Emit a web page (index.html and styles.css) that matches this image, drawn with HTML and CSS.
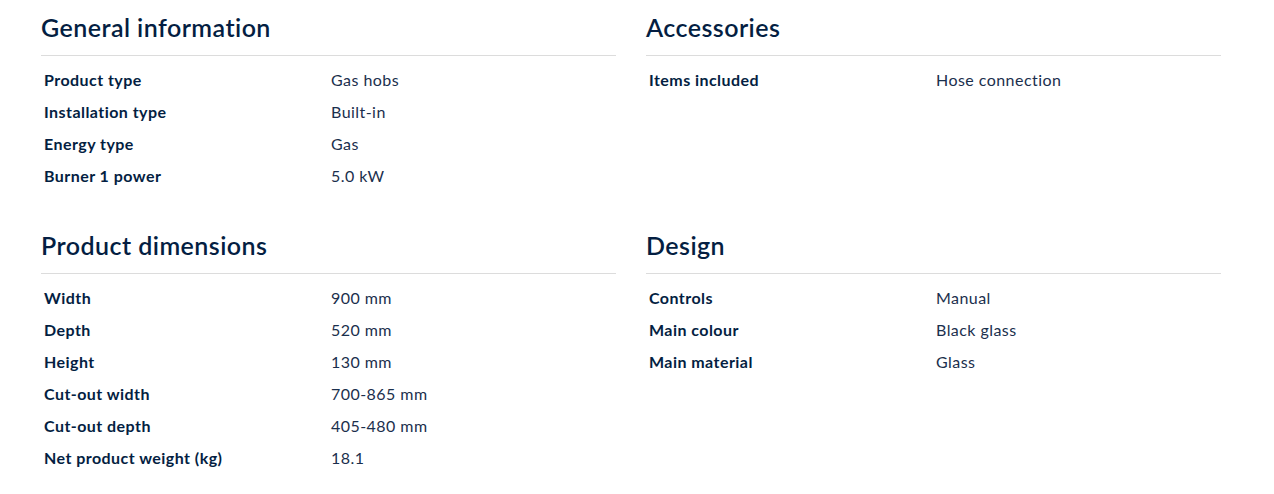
FILE: index.html
```html
<!DOCTYPE html>
<html lang="en">
<head>
<meta charset="utf-8">
<title>Specifications</title>
<link rel="stylesheet" href="styles.css">
</head>
<body>
<div class="specs">
  <div class="col">
    <section class="group">
      <h2 class="group-title">General information</h2>
      <dl class="rows">
        <div class="row"><dt>Product type</dt><dd>Gas hobs</dd></div>
        <div class="row"><dt>Installation type</dt><dd>Built-in</dd></div>
        <div class="row"><dt>Energy type</dt><dd>Gas</dd></div>
        <div class="row"><dt>Burner 1 power</dt><dd>5.0 kW</dd></div>
      </dl>
    </section>
    <section class="group">
      <h2 class="group-title">Product dimensions</h2>
      <dl class="rows">
        <div class="row"><dt>Width</dt><dd>900 mm</dd></div>
        <div class="row"><dt>Depth</dt><dd>520 mm</dd></div>
        <div class="row"><dt>Height</dt><dd>130 mm</dd></div>
        <div class="row"><dt>Cut-out width</dt><dd>700-865 mm</dd></div>
        <div class="row"><dt>Cut-out depth</dt><dd>405-480 mm</dd></div>
        <div class="row"><dt>Net product weight (kg)</dt><dd>18.1</dd></div>
      </dl>
    </section>
  </div>
  <div class="col">
    <section class="group">
      <h2 class="group-title">Accessories</h2>
      <dl class="rows">
        <div class="row"><dt>Items included</dt><dd>Hose connection</dd></div>
      </dl>
    </section>
    <section class="group group-spaced">
      <h2 class="group-title">Design</h2>
      <dl class="rows">
        <div class="row"><dt>Controls</dt><dd>Manual</dd></div>
        <div class="row"><dt>Main colour</dt><dd>Black glass</dd></div>
        <div class="row"><dt>Main material</dt><dd>Glass</dd></div>
      </dl>
    </section>
  </div>
</div>
</body>
</html>
```
FILE: styles.css
```css
* { box-sizing: border-box; }
html, body { margin: 0; padding: 0; background: #ffffff; }
body {
  font-family: Lato, "Noto Sans", sans-serif;
  color: #041e42;
}
.specs {
  display: grid;
  grid-template-columns: 575px 575px;
  column-gap: 30px;
  padding-left: 41px;
}
.col {
  display: flex;
  flex-direction: column;
  row-gap: 27px;
}
.group-spaced { margin-top: 96px; }
.group-title {
  margin: 0;
  padding: 11px 0 12px;
  font-size: 25px;
  line-height: 32px;
  font-weight: 600;
  letter-spacing: 0.45px;
  border-bottom: 1px solid #dcdcdc;
}
.rows {
  margin: 0;
  padding-top: 7px;
}
.row {
  display: grid;
  grid-template-columns: 290px 1fr;
  height: 32px;
  align-items: center;
  font-size: 16px;
  letter-spacing: 0.45px;
}
.row dt {
  padding-left: 3px;
  font-weight: 700;
}
.row dd {
  margin: 0;
  color: #1b2f4d;
  font-weight: 400;
}
```
